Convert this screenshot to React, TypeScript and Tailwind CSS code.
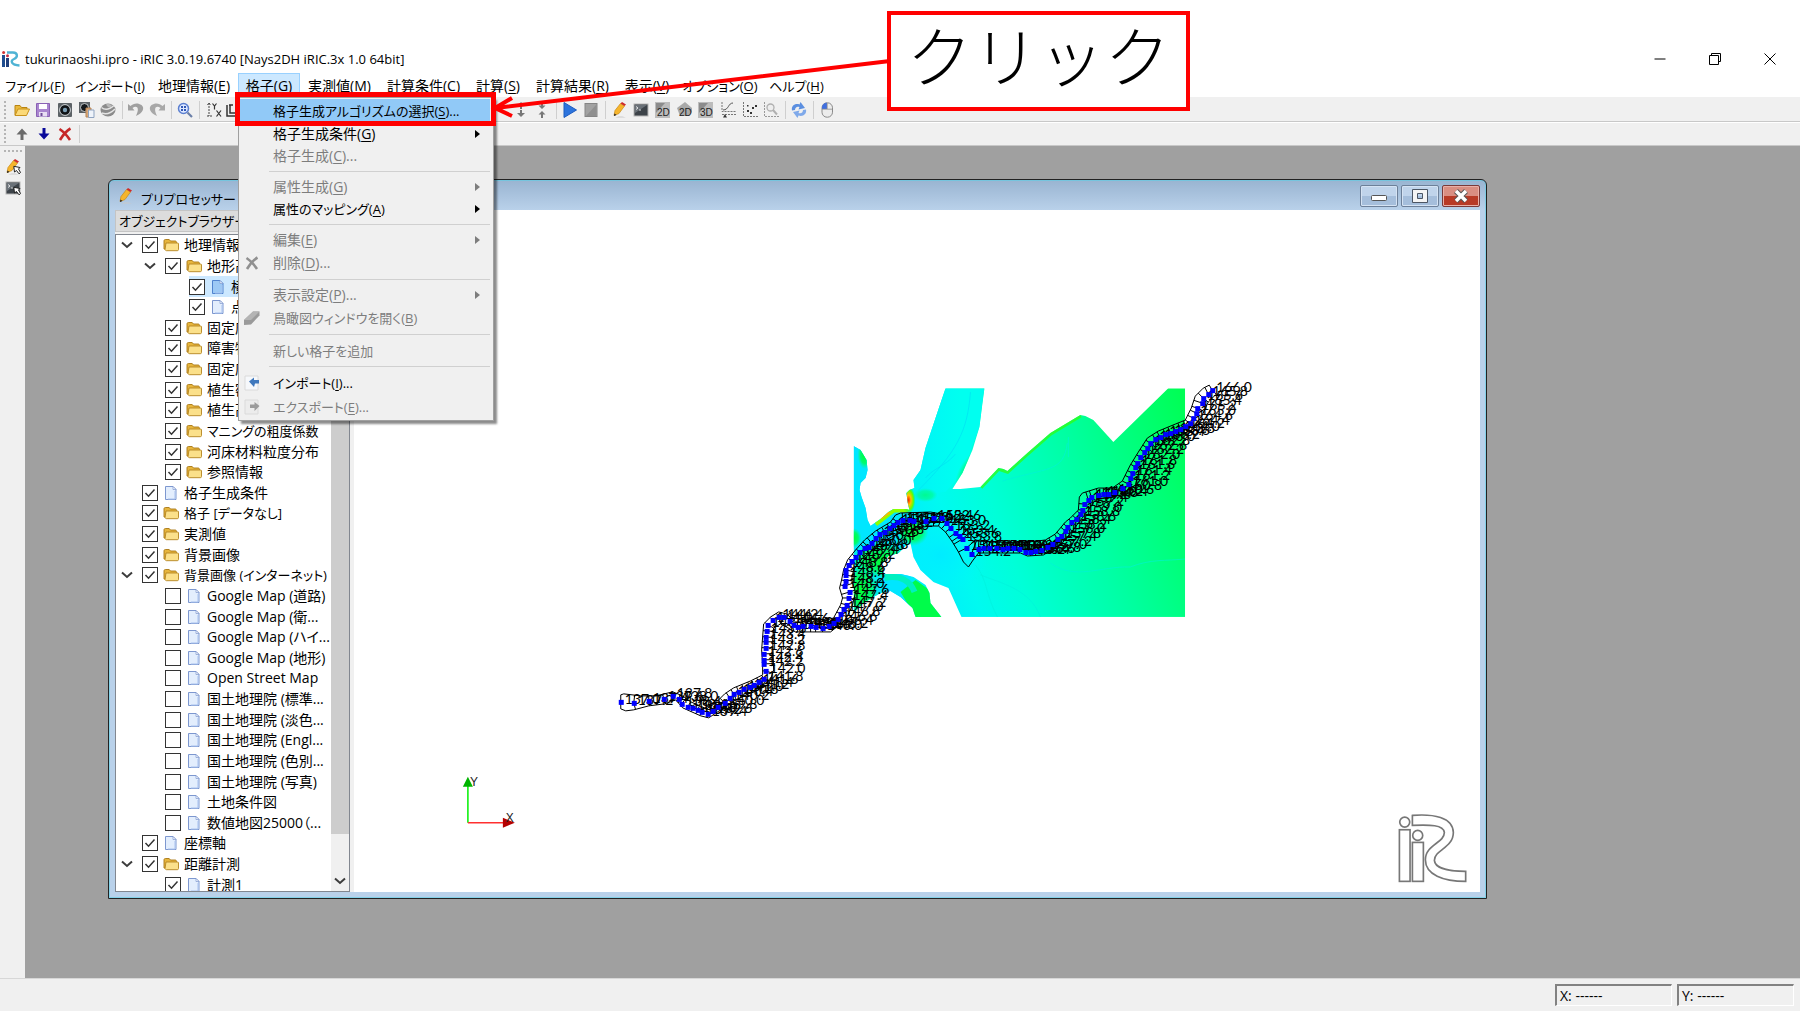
import React from "react";

type Pt = [number, number];

/* ---------- small icons ---------- */

type IconProps = { children: React.ReactNode; size?: string };
const Ico = ({ children, size = "size-4" }: IconProps) => (
  <svg viewBox="0 0 16 16" className={`${size} shrink-0 overflow-visible`} aria-hidden="true">
    {children}
  </svg>
);

const FolderOpen = () => (
  <Ico>
    <path d="M1 13V3.5h5l1.5 2H13V7" fill="#e9b93c" stroke="#b98412" />
    <path d="M1 13.5 4 7h11.5l-3 6.5z" fill="#fbd978" stroke="#c8921c" />
  </Ico>
);
const Save = () => (
  <Ico>
    <path d="M1.5 1.5h13v13h-13z" fill="#a985cf" stroke="#8a62b5" />
    <path d="M4 2h8v5H4z" fill="#fff" />
    <path d="M4 10h8v4.5H4z" fill="#e8def3" />
    <path d="M5.5 11h2v3h-2z" fill="#6f4b98" />
  </Ico>
);
const Camera = () => (
  <Ico>
    <rect x="1" y="1" width="14" height="14" rx="1" fill="#5c6266" />
    <circle cx="8" cy="8" r="5.4" fill="#101417" stroke="#d5dadd" />
    <circle cx="8" cy="8" r="2.2" fill="#7c9fb5" />
  </Ico>
);
const CameraCopy = () => (
  <Ico>
    <rect x="0" y="0" width="11" height="11" fill="#5c6266" />
    <circle cx="5.5" cy="5.5" r="4" fill="#14181b" stroke="#c5cacd" />
    <path d="M7 6h5v9H7z" fill="#d9a878" stroke="#b98657" />
    <path d="M9.5 8h5.5v7.5H9.5z" fill="#eef3fa" stroke="#8fa3c0" />
  </Ico>
);
const Globe = () => (
  <Ico>
    <ellipse cx="8" cy="8" rx="7.500" ry="6.500" fill="#8b8b8b" />
    <path d="M1.500 5.500C6 9 10 7 14 3.500M2 11c5 2 9 0 13-4" stroke="#e4e4e4" strokeWidth="1.500" fill="none" />
    <path d="M6 2.500c3-1 5 0 6 1.500-2 2-4 2-6-1.500z" fill="#b9b9b9" />
  </Ico>
);
const Undo = () => (
  <Ico>
    <path d="M0 2v6.500h6.500L4.500 6C9 3 12 6 8 14 15 11 17 6 13.500 3 10 .5 5.500 1 2.500 4z" fill="#a0a0a0" />
  </Ico>
);
const Redo = () => (
  <Ico>
    <path d="M16 2v6.500H9.500L11.500 6C7 3 4 6 8 14 1 11-1 6 2.500 3 6 .5 10.500 1 13.500 4z" fill="#a8a8a8" />
  </Ico>
);
const ZoomIcon = () => (
  <Ico>
    <circle cx="6.500" cy="6.500" r="5" fill="#dfe9ff" stroke="#5b7fd0" strokeWidth="1.500" />
    <path d="M4 4h2v2H4zM7 4h2v2H7zM4 7h2v2H4zM7 7h2v2H7z" fill="#3158b5" />
    <path d="m10.500 10.500 4.500 4.500" stroke="#6a7fa8" strokeWidth="2.200" />
  </Ico>
);
const AxesIcon = () => (
  <Ico>
    <path d="M3 1v13M1 14h6M1.500 3 3 .8 4.500 3" fill="none" stroke="#444" strokeDasharray="2 1" />
    <path d="M6.500 1.500 8.500 4l2-2.500M8.500 4v3.500M10.500 8.500l4.500 6M15 8.500l-4.500 6" fill="none" stroke="#333" strokeWidth="1.200" />
  </Ico>
);
const CornerIcon = () => (
  <Ico>
    <path d="M2 3v11h12M5 3v8h8M4 3h4" fill="none" stroke="#333" strokeWidth="1.500" />
  </Ico>
);
const Spread = ({ inward = false }: { inward?: boolean }) => (
  <Ico>
    {inward ? (
      <path d="M8 7 4.500 3.500H7V0h2v3.500h2.500zM8 9l-3.500 3.500H7V16h2v-3.500h2.500z" fill="#777" />
    ) : (
      <path d="M8 0 4.500 3.500H7V7h2V3.500h2.500zM8 15l-4-4h3V8h2v3h3z" fill="#777" />
    )}
  </Ico>
);
const Play = () => (
  <Ico>
    <path d="M2 .5 14.500 8 2 15.500z" fill="#2d74dd" stroke="#1d5cc0" />
  </Ico>
);
const Stop = () => (
  <Ico>
    <rect x="2" y="1.500" width="12" height="13" fill="#a2a2a2" stroke="#858585" />
    <path d="M3 14 13 3v11z" fill="#8f8f8f" />
  </Ico>
);
const Pencil = () => (
  <Ico>
    <path d="M3 15.500c3-1.500 8-1.500 11 0z" fill="#c9c9c9" />
    <path d="m2 13.500 1-5L8.500 1.500l4 2.500-5.500 7.500z" fill="#f6b52c" stroke="#c98a14" strokeWidth=".7" />
    <path d="M8.500 1.500 10 0l4 2.500L12.500 4z" fill="#cf2a2a" />
    <path d="m2 14 .4-2.500L4.500 13z" fill="#222" />
  </Ico>
);
const Console = () => (
  <Ico>
    <rect x="1" y="2" width="14" height="12" fill="#3d4349" stroke="#b6b6b6" />
    <path d="M2 3h12L2 11z" fill="#6a7178" />
    <path d="m3 4.500 2 1.500-2 1.500M6 8h2" stroke="#fff" strokeWidth=".8" fill="none" />
  </Ico>
);
const Dim = ({ label, house = false }: { label: string; house?: boolean }) => (
  <Ico>
    {house ? (
      <path d="M0 6 8 0l7 6v4l-3 4H3z" fill="#a9a9a9" />
    ) : (
      <path d="M0 0h15v16H0z" fill="#bcbcbc" />
    )}
    {!house && <path d="M1 1h9L1 11z" fill="#8c8c8c" />}
    <text x="2" y="14" className="font-['Liberation_Sans'] text-[10px]" fill="#222">{label}</text>
  </Ico>
);
const ChartLine = () => (
  <Ico>
    <path d="M2 0v9.500h14M2 12.500h14" fill="none" stroke="#777" strokeDasharray="2 1" />
    <path d="M3 8c6 0 5-7 10-7" fill="none" stroke="#555" />
    <path d="M3 15.500 5 12l2 3.500z" fill="#333" />
  </Ico>
);
const ChartDots = () => (
  <Ico>
    <path d="M1.500 0v14.500H16" fill="none" stroke="#777" strokeDasharray="2 1" />
    <path d="M5 8h2v2H5zM8 10h2v2H8zM10 5h2v2h-2zM13 3h2v2h-2zM5 3h1.500v1.500H5z" fill="#333" />
  </Ico>
);
const ChartZoom = () => (
  <Ico>
    <path d="M1.500 0v14.500H16" fill="none" stroke="#999" strokeDasharray="2 1" />
    <circle cx="7.500" cy="5.500" r="3.500" fill="#eee" stroke="#b0b0b0" strokeWidth="1.300" />
    <path d="m10 8 4 4.500" stroke="#b0b0b0" strokeWidth="2" />
  </Ico>
);
const Refresh = () => (
  <Ico>
    <path d="M1 8.500C0 4 4 1 8.500 2.500L9.500 0l4.500 6-6.500 1.500 1-2.500C6 4 4 5.500 4 8z" fill="#5b8fe0" />
    <path d="M15 7.500C16 12 12 15 7.500 13.500L6.500 16 2 10l6.500-1.500-1 2.500c2.500 1 4.500-.5 4.500-3z" fill="#7fa9ea" />
  </Ico>
);
const Mouse = () => (
  <Ico>
    <rect x="3" y=".8" width="10.500" height="14.400" rx="5" fill="#ececec" stroke="#8b8b8b" />
    <path d="M3 7V5.500C3 3 5 .8 8 .8V7z" fill="#3f6fe0" />
    <path d="M3 7.200h10.500M8.200 1v6" stroke="#8b8b8b" strokeWidth=".8" />
  </Ico>
);
const ArrowUp = () => (
  <Ico>
    <path d="m8 2.500 5.500 6h-4V14h-3V8.500h-4z" fill="#6a6a6a" />
  </Ico>
);
const ArrowDown = () => (
  <Ico>
    <path d="m8 13.500 5.500-6h-4V2h-3v5.500h-4z" fill="#0a0a9a" />
  </Ico>
);
const Cross = ({ color = "#c62828" }: { color?: string }) => (
  <Ico>
    <path d="M2.500 3c4 2.500 7.500 6.500 10.500 11M13.500 2.500C9 5 6 9 3 14" stroke={color} strokeWidth="2.600" fill="none" />
  </Ico>
);
const Folder = () => (
  <Ico>
    <path d="M1 12V4c0-1 .5-1.500 1.500-1.500h3.700L7.500 4H12c1 0 1.500.5 1.500 1.500V12z" fill="#e6b53d" stroke="#a87714" strokeWidth=".9" />
    <path d="M3 6h11.500c.8 0 1 .4 1 1v5.500c0 .7-.4 1.200-1.200 1.200H3.500C2.800 13.700 2 13 2 12.500z" fill="#fbe08a" stroke="#b48520" strokeWidth=".9" />
  </Ico>
);
const Page = ({ selected = false }: { selected?: boolean }) => (
  <Ico>
    <path d="M2.500 1.500h7.500l3 3v10H2.500z" fill={selected ? "#9cc9f5" : "#e3eefd"} stroke={selected ? "#4f83cf" : "#7d97cf"} />
    <path d="M10 1.500v3h3z" fill="#fff" stroke="#7d97cf" strokeWidth=".7" />
    <path d="M12 6v8H5" fill="none" stroke="#a9c3ee" />
  </Ico>
);
const Chevron = () => (
  <svg viewBox="0 0 12 8" className="h-2 w-3 shrink-0" aria-hidden="true">
    <path d="m1 1.500 5 4.500 5-4.500" fill="none" stroke="#3c3c3c" strokeWidth="2" />
  </svg>
);
const Brick = () => (
  <Ico>
    <path d="M0 10 9 1.500h6.500v4L7 14.500 0 15z" fill="#9a9a9a" />
    <path d="M0 10 9 1.500h6.500L7 10z" fill="#b4b4b4" />
  </Ico>
);
const Transfer = ({ active = false }: { active?: boolean }) => (
  <Ico>
    <path d="M1 1h13v14H1z" fill={active ? "#f6f8fb" : "#ececec"} stroke="#dadada" />
    {active ? (
      <path d="m5 6.500 5-4V5h5v3.500h-4L10 12z" fill="#3f78bd" />
    ) : (
      <path d="m15.500 7-5-4v2.500H6V9h4.500v3z" fill="#9b9b9b" />
    )}
  </Ico>
);
const AppLogo = () => (
  <svg viewBox="0 0 18 16" className="h-4 w-[18px] shrink-0" aria-hidden="true">
    <path d="M0 4h3v12H0z" fill="#1f4d8f" />
    <circle cx="1.600" cy="1.600" r="1.500" fill="#d23636" />
    <path d="M4 7h3v9H4z" fill="#1f3f7c" />
    <circle cx="5.500" cy="4.800" r="1.500" fill="#c72f45" />
    <path d="M5 1.500h6c5 0 5 5 1 6.500-4 1.500-3 6 5.500 6.500" fill="none" stroke="#4fb3d4" strokeWidth="2.400" />
  </svg>
);

/* ---------- menu bar ---------- */

const Key = ({ k }: { k: string }) => (
  <>
    (<span className="underline underline-offset-2">{k}</span>)
  </>
);

type Entry =
  | { sep: true }
  | { sep?: false; label: string; k?: string; dots?: boolean; on?: boolean; sub?: boolean; hot?: boolean; small?: boolean; icon?: React.ReactNode; h: string };

const entries: Entry[] = [
  { label: "格子生成アルゴリズムの選択", k: "S", dots: true, on: true, hot: true, small: true, h: "h-6" },
  { label: "格子生成条件", k: "G", on: true, sub: true, h: "h-[22px]" },
  { label: "格子生成", k: "C", dots: true, h: "h-[22px]" },
  { sep: true },
  { label: "属性生成", k: "G", sub: true, h: "h-[22px]" },
  { label: "属性のマッピング", k: "A", on: true, sub: true, small: true, h: "h-[22px]" },
  { sep: true },
  { label: "編集", k: "E", sub: true, h: "h-[22px]" },
  { label: "削除", k: "D", dots: true, icon: <Cross color="#909090" />, h: "h-6" },
  { sep: true },
  { label: "表示設定", k: "P", dots: true, sub: true, h: "h-[22px]" },
  { label: "鳥瞰図ウィンドウを開く", k: "B", small: true, icon: <Brick />, h: "h-6" },
  { sep: true },
  { label: "新しい格子を追加", small: true, h: "h-[23px]" },
  { sep: true },
  { label: "インポート", k: "I", dots: true, on: true, small: true, icon: <Transfer active />, h: "h-6" },
  { label: "エクスポート", k: "E", dots: true, small: true, icon: <Transfer />, h: "h-6" },
];

const GridMenu = () => (
  <div role="menu" className="absolute top-full left-0 z-20 w-[256px] border border-[#a0a0a0] bg-[#f0f0f0] p-px pr-[3px] shadow-[3px_3px_2px_rgba(0,0,0,0.45)]">
    {entries.map((e, i) =>
      e.sep ? (
        <div key={i} className="flex h-[9px] items-center pl-[29px]">
          <div className="h-px w-full bg-[#d0d0d0]" />
        </div>
      ) : (
        <button
          key={i}
          role="menuitem"
          className={`flex w-full items-center text-left whitespace-nowrap ${e.h} ${e.small ? "text-[13px]" : ""} ${e.hot ? "bg-[#91c9f7]" : ""} ${e.on ? "text-black" : "text-[#7d7d7d]"}`}
        >
          <span className="flex w-[33px] shrink-0 pl-1">{e.icon}</span>
          <span className="grow">
            {e.label}
            {e.k && <Key k={e.k} />}
            {e.dots && "..."}
          </span>
          {e.sub && (
            <svg viewBox="0 0 5 8" className="mr-2.5 h-2 w-[5px]" aria-hidden="true">
              <path d="M0 0v8l5-4z" fill="currentColor" />
            </svg>
          )}
        </button>
      ),
    )}
  </div>
);

const menus = [
  { label: "ファイル", k: "F", w: "w-[70px]", small: true },
  { label: "インポート", k: "I", w: "w-[80px]", small: true },
  { label: "地理情報", k: "E", w: "w-[88px]" },
  { label: "格子", k: "G", w: "w-[62px]", open: true },
  { label: "実測値", k: "M", w: "w-[79px]" },
  { label: "計算条件", k: "C", w: "w-[89px]" },
  { label: "計算", k: "S", w: "w-[60px]" },
  { label: "計算結果", k: "R", w: "w-[89px]" },
  { label: "表示", k: "V", w: "w-[60px]" },
  { label: "オプション", k: "O", w: "w-[86px]", small: true },
  { label: "ヘルプ", k: "H", w: "w-[67px]", small: true },
];

/* ---------- tool bars ---------- */

const Sep = ({ w }: { w: string }) => (
  <div className={`flex shrink-0 justify-center ${w}`}>
    <div className="h-[18px] w-px bg-[#cfcfcf]" />
  </div>
);
const Grip = () => <div className="mr-[5px] ml-1 h-[18px] w-0.5 shrink-0 border-l-2 border-dotted border-[#b5b5b5]" />;

const Tools = ({ w, items }: { w: string; items: [string, React.ReactNode][] }) => (
  <div className={`flex shrink-0 ${w}`}>
    {items.map(([name, icon]) => (
      <button key={name} aria-label={name} className="flex flex-1 justify-center">
        {icon}
      </button>
    ))}
  </div>
);

/* ---------- object browser ---------- */

type Node = { t: string; l: 0 | 1 | 2; f?: boolean; c?: boolean; x?: boolean; s?: boolean; small?: boolean };
const tree: Node[] = [
  { t: "地理情報", l: 0, f: true, c: true, x: true },
  { t: "地形高", l: 1, f: true, c: true, x: true },
  { t: "横断", l: 2, c: true, s: true },
  { t: "点群", l: 2, c: true },
  { t: "固定床", l: 1, f: true, c: true },
  { t: "障害物", l: 1, f: true, c: true },
  { t: "固定床", l: 1, f: true, c: true },
  { t: "植生密", l: 1, f: true, c: true },
  { t: "植生高", l: 1, f: true, c: true },
  { t: "マニングの粗度係数", l: 1, f: true, c: true, small: true },
  { t: "河床材料粒度分布", l: 1, f: true, c: true },
  { t: "参照情報", l: 1, f: true, c: true },
  { t: "格子生成条件", l: 0, c: true },
  { t: "格子 [データなし]", l: 0, f: true, c: true, small: true },
  { t: "実測値", l: 0, f: true, c: true },
  { t: "背景画像", l: 0, f: true, c: true },
  { t: "背景画像 (インターネット)", l: 0, f: true, c: true, x: true, small: true },
  { t: "Google Map (道路)", l: 1 },
  { t: "Google Map (衛...", l: 1 },
  { t: "Google Map (ハイ...", l: 1 },
  { t: "Google Map (地形)", l: 1 },
  { t: "Open Street Map", l: 1 },
  { t: "国土地理院 (標準...", l: 1 },
  { t: "国土地理院 (淡色...", l: 1 },
  { t: "国土地理院 (Engl...", l: 1 },
  { t: "国土地理院 (色別...", l: 1 },
  { t: "国土地理院 (写真)", l: 1 },
  { t: "土地条件図", l: 1 },
  { t: "数値地図25000（...", l: 1 },
  { t: "座標軸", l: 0, c: true },
  { t: "距離計測", l: 0, f: true, c: true, x: true },
  { t: "計測1", l: 1, c: true },
];
const indent = { 0: "pl-[5px]", 1: "pl-7", 2: "pl-[52px]" };

const TreeRow = ({ n }: { n: Node }) => (
  <li className={`flex min-h-0 flex-1 items-center ${indent[n.l]}`}>
    <span className="flex w-[21px] shrink-0">{n.x && <Chevron />}</span>
    <label className={`flex h-full grow items-center whitespace-nowrap ${n.small ? "text-[13px]" : ""} ${n.s ? "bg-[#cce8ff]" : ""}`}>
      <span className="relative flex size-4 shrink-0">
        <input type="checkbox" defaultChecked={n.c} className="peer size-4 appearance-none border border-[#333] bg-white" />
        <svg viewBox="0 0 16 16" className="pointer-events-none absolute inset-0 hidden size-4 peer-checked:block" aria-hidden="true">
          <path d="m3.500 8 3 3.200 6-6.700" fill="none" stroke="#333" strokeWidth="1.500" />
        </svg>
      </span>
      <span className="mr-[5px] ml-[5px] flex">{n.f ? <Folder /> : <Page selected={n.s} />}</span>
      {n.t}
    </label>
  </li>
);

/* ---------- map ---------- */

const river: Pt[] = [
  [620, 702], [633, 703], [648, 701], [663, 699], [672, 696], [678, 699], [681, 704], [687, 707], [692, 708], [697, 710],
  [701, 712], [707, 714], [712, 711], [717, 707], [724, 703], [729, 698], [733, 694], [738, 692], [743, 689], [749, 687],
  [753, 685], [758, 682], [763, 679], [765, 671], [763, 664], [763, 660], [763, 654], [765, 648], [765, 642], [765, 637],
  [766, 631], [767, 625], [772, 620], [778, 617], [783, 617], [789, 621], [793, 625], [797, 627], [802, 626], [810, 626],
  [815, 627], [822, 628], [828, 626], [833, 623], [837, 619], [840, 614], [843, 609], [846, 605], [848, 598], [849, 592],
  [844, 586], [845, 581], [845, 575], [845, 570], [848, 565], [851, 561], [855, 557], [859, 552], [864, 548], [868, 547],
  [871, 543], [875, 538], [879, 534], [884, 532], [889, 528], [893, 525], [897, 522], [902, 520], [909, 520], [913, 521],
  [925, 521], [933, 518], [941, 518], [946, 523], [950, 528], [955, 533], [959, 536], [962, 539], [966, 548], [971, 554],
  [978, 549], [983, 548], [989, 548], [996, 548], [1002, 549], [1007, 548], [1013, 548], [1019, 549], [1025, 552], [1030, 552],
  [1035, 551], [1041, 550], [1047, 547], [1052, 544], [1057, 539], [1061, 536], [1065, 531], [1067, 527], [1071, 522], [1076, 519],
  [1080, 514], [1082, 510], [1084, 504], [1088, 500], [1091, 497], [1098, 495], [1103, 494], [1108, 494], [1114, 492], [1122, 488],
  [1128, 484], [1130, 478], [1132, 473], [1135, 467], [1137, 463], [1140, 457], [1144, 452], [1147, 448], [1150, 443], [1155, 439],
  [1160, 437], [1165, 434], [1170, 433], [1175, 431], [1180, 429], [1185, 426], [1190, 423], [1193, 418], [1196, 413], [1197, 408],
  [1202, 403], [1203, 398], [1208, 394], [1212, 390],
];
const upper: Pt[] = [
  [620, 695], [623, 694], [640, 696], [655, 696], [672, 692], [682, 696], [690, 702], [706, 709], [716, 702], [724, 694],
  [733, 688], [750, 681], [762, 675], [762, 665], [761, 650], [763, 624], [770, 617], [778, 612], [786, 614], [795, 622],
  [820, 622], [833, 618], [840, 605], [842, 598], [839, 588], [841, 580], [843, 570], [847, 560], [855, 550], [864, 540],
  [875, 531], [890, 522], [895, 515], [900, 513], [930, 512], [941, 514], [953, 519], [962, 524], [968, 532], [976, 541],
  [1020, 543], [1045, 540], [1055, 534], [1065, 522], [1070, 518], [1078, 510], [1079, 497], [1082, 493], [1098, 488], [1112, 488],
  [1122, 481], [1130, 465], [1138, 452], [1147, 438], [1158, 431], [1175, 424], [1185, 420], [1191, 408], [1195, 396], [1203, 388],
  [1209, 385],
];
const lower: Pt[] = [
  [620, 709], [625, 711], [633, 710], [648, 706], [664, 704], [675, 700], [682, 708], [700, 716], [708, 718], [720, 710],
  [735, 700], [768, 685], [773, 670], [772, 640], [773, 628], [780, 624], [795, 632], [830, 632], [845, 620], [852, 605],
  [855, 592], [851, 580], [853, 570], [862, 558], [880, 543], [900, 532], [915, 528], [930, 526], [938, 526], [945, 532],
  [952, 542], [958, 552], [963, 562], [968, 567], [972, 561], [978, 553], [1000, 553], [1020, 553], [1027, 556], [1043, 555],
  [1048, 552], [1062, 543], [1075, 527], [1088, 510], [1095, 500], [1120, 495], [1135, 485], [1140, 467], [1155, 447], [1175, 437],
  [1192, 430], [1202, 415], [1208, 402], [1216, 394],
];

const nearest = ([x, y]: Pt, line: Pt[]): Pt => {
  let best: Pt = line[0];
  let min = Infinity;
  for (let i = 1; i < line.length; i++) {
    const [ax, ay] = line[i - 1];
    const [bx, by] = line[i];
    const dx = bx - ax;
    const dy = by - ay;
    const t = Math.max(0, Math.min(1, ((x - ax) * dx + (y - ay) * dy) / (dx * dx + dy * dy)));
    const p: Pt = [ax + t * dx, ay + t * dy];
    const d = Math.hypot(p[0] - x, p[1] - y);
    if (d < min) {
      min = d;
      best = p;
    }
  }
  return best;
};
const poly = (a: Pt[]) => a.map((p) => p.join(",")).join(" ");
const crossings = river
  .map((p) => {
    const a = nearest(p, upper);
    const b = nearest(p, lower);
    return `M${a[0]} ${a[1]}L${p[0]} ${p[1]}L${b[0]} ${b[1]}`;
  })
  .join("");
const station = (i: number) => (137 + Math.round((i / (river.length - 1)) * 145) / 5).toFixed(1);

const terrain =
  "M853 446 860 450 866 460 867 470 865 478 860 483 859 490 861 497 865 508 867 520 870 526 880 519 888 512 893 509 905 509 909 510 907 502 906 493 909 490 914 488 913 480 920 470 925 448 945 388H984L982 403 979 427 972 450 962 473 952 489 960 489 980 487 998 468 1003 469 1007 471 1027 453 1050 433 1080 415 1085 416 1093 420 1113 442 1168 388H1185V617H961L948 588 933 582 920 570 913 557 910 543 905 546 898 553 888 556 880 565 883 574 900 574 913 577 925 585 929 593 930 603 941 617H915L912 608 900 597 890 591 880 593 873 597 863 603 853 613Z";

const RiverMap = () => (
  <svg viewBox="353 211 1127 680" className="size-full" role="img" aria-label="河川の地形図">
    <defs>
      <linearGradient id="elev" gradientUnits="userSpaceOnUse" x1="900" y1="560" x2="1200" y2="450">
        <stop offset="0" stopColor="#00e8ff" />
        <stop offset=".18" stopColor="#00faf0" />
        <stop offset=".33" stopColor="#00ffd8" />
        <stop offset=".6" stopColor="#00ffa6" />
        <stop offset="1" stopColor="#00ff56" />
      </linearGradient>
      <linearGradient id="bankEdge" gradientUnits="userSpaceOnUse" x1="853" y1="0" x2="960" y2="0">
        <stop offset="0" stopColor="#00e4ff" />
        <stop offset="1" stopColor="#00fff0" />
      </linearGradient>
      <radialGradient id="hot">
        <stop offset="0" stopColor="#ff2000" />
        <stop offset=".35" stopColor="#ffc400" />
        <stop offset=".7" stopColor="#60ff00" />
        <stop offset="1" stopColor="#00ff60" stopOpacity="0" />
      </radialGradient>
      <radialGradient id="green">
        <stop offset="0" stopColor="#00ff30" />
        <stop offset=".6" stopColor="#00ff50" stopOpacity=".8" />
        <stop offset="1" stopColor="#00ff80" stopOpacity="0" />
      </radialGradient>
      <radialGradient id="cool">
        <stop offset="0" stopColor="#00ecff" />
        <stop offset="1" stopColor="#00f6ff" stopOpacity="0" />
      </radialGradient>
      <clipPath id="land">
        <path d={terrain} />
      </clipPath>
    </defs>
    <g clipPath="url(#land)">
      <rect x="853" y="388" width="332" height="229" fill="url(#elev)" />
      <rect x="853" y="388" width="57" height="229" fill="#00e6ff" />
      <path d="M945 388H984L979 427 962 473 945 492 905 495Z" fill="url(#bankEdge)" />
      <ellipse cx="940" cy="555" rx="48" ry="40" fill="url(#cool)" />
      <ellipse cx="864" cy="455" rx="7" ry="14" fill="url(#green)" />
      <ellipse cx="853" cy="538" rx="8" ry="10" fill="url(#green)" />
      <ellipse cx="880" cy="560" rx="30" ry="18" fill="url(#green)" />
      <ellipse cx="860" cy="590" rx="18" ry="26" fill="url(#green)" />
      <ellipse cx="912" cy="532" rx="16" ry="14" fill="url(#green)" />
      <ellipse cx="968" cy="470" rx="22" ry="9" transform="rotate(-60 968 470)" fill="url(#green)" opacity=".6" />
      <ellipse cx="925" cy="495" rx="12" ry="7" fill="url(#green)" opacity=".5" />
      <path d="M900 592 915 580 929 590 941 617H915Z" fill="#00ff2a" opacity=".85" />
      <path d="M884 578c16-4 26 4 30 14" fill="none" stroke="#00f0c0" strokeWidth="6" />
      <path d="M875 524 893 510H907" fill="none" stroke="#8cff00" strokeWidth="5" />
      <path d="M880 518 889 512" stroke="#ffb400" strokeWidth="3" />
      <ellipse cx="908" cy="500" rx="7" ry="14" fill="url(#hot)" />
      <path d="M980 487 998 468 1007 471 1027 453 1050 433 1080 415" fill="none" stroke="#30ff10" strokeWidth="5" opacity=".75" />
      <path d="M975 565c12 14 10 30 22 52M980 575c20 8 50 14 60 42M1050 563c25 18 50 3 80 4 20-8 35-6 55-8M1067 443c-4 30-20 24-65 38M1068 437v20" fill="none" stroke="#00f0dc" strokeWidth="1" opacity=".6" />
      <path d="M970 392c-3 40-14 60-52 98M925 478c8-10 20-12 30-24" fill="none" stroke="#00dcf4" strokeWidth="1" opacity=".6" />
    </g>
    <g fill="none" stroke="#000" strokeWidth="1">
      <polyline points={poly(upper)} />
      <polyline points={poly(lower)} />
      <path d={crossings} />
    </g>
    <g className="font-['Lato'] text-[14px]" fill="#000">
      {river.map(([x, y], i) => (
        <text key={i} x={x + 4} y={y + 2}>
          {station(i)}
        </text>
      ))}
    </g>
    <g fill="#0000ff">
      {river.map(([x, y], i) => (
        <rect key={i} x={x - 2} y={y - 2} width="5" height="5" />
      ))}
    </g>
    <path d="M467 823V786" stroke="#00f000" strokeWidth="1.500" />
    <path d="M467 823H503" stroke="#ff3030" strokeWidth="1.500" />
    <path d="m462 787 5-10 5 10z" fill="#00b400" />
    <path d="m502 818 12 5-12 5z" fill="#b40000" />
    <g className="font-['Liberation_Sans'] text-[12px]" fill="#222">
      <text x="469" y="786">Y</text>
      <text x="505" y="822">X</text>
    </g>
    <g transform="translate(1380 800) scale(.3333)" fill="#fff" stroke="#777" strokeWidth="5">
      <circle cx="74" cy="67" r="15" />
      <rect x="58" y="90" width="32" height="155" />
      <path d="M97 47C160 42 218 52 220 98C220 145 163 150 163 182C165 208 215 215 257 215V245C190 245 136 225 136 180C136 135 193 130 193 98C190 75 150 75 97 77Z" />
      <circle cx="113" cy="107" r="15" />
      <rect x="97" y="128" width="33" height="117" />
    </g>
  </svg>
);

const CaptionButton = ({ name, close = false, children }: { name: string; close?: boolean; children: React.ReactNode }) => (
  <button
    aria-label={name}
    className={`flex h-[22px] w-[38px] items-center justify-center rounded-[2px] border ${
      close
        ? "border-[#7a3a3a] bg-linear-to-b from-[#d98e82] from-50% to-[#b83a26] to-50% inset-ring inset-ring-[#e9b0a8]"
        : "border-[#6d8099] bg-linear-to-b from-[#c0d4eb] from-50% to-[#a5bedb] to-50% inset-ring inset-ring-[#d5e3f3]"
    }`}
  >
    {children}
  </button>
);

const Preprocessor = () => (
  <section className="absolute top-[33px] left-[83px] flex h-[720px] w-[1379px] flex-col rounded-t-md border border-[#222] bg-[#b9d1ea] bg-linear-to-b from-[#99b4d1] to-[#b9d1ea] to-[30px] px-[6px] pb-[6px] inset-ring inset-ring-[#5fd0e6]/60">
    <header className="flex h-[30px] shrink-0 items-center gap-[3px] pt-0.5 pl-[3px]">
      <Pencil />
      <h2 className="grow pt-1.5 pl-1 text-[13px]">プリプロセッサー</h2>
      <CaptionButton name="最小化">
        <svg viewBox="0 0 16 6" className="mt-1 h-1.5 w-4">
          <rect x=".5" y=".5" width="15" height="5" rx="1" fill="#fff" stroke="#555" />
        </svg>
      </CaptionButton>
      <CaptionButton name="最大化">
        <svg viewBox="0 0 16 14" className="h-3.5 w-4">
          <path d="M.5.5h15v13H.5zM5.500 4.500v5h5v-5z" fill="#f4f4f4" fillRule="evenodd" stroke="#4b5563" />
        </svg>
      </CaptionButton>
      <CaptionButton name="閉じる" close>
        <svg viewBox="0 0 16 14" className="h-3.5 w-4">
          <path d="m3 2 10 10M13 2 3 12" stroke="#555" strokeWidth="5.500" />
          <path d="m3 2 10 10M13 2 3 12" stroke="#fff" strokeWidth="3.500" />
        </svg>
      </CaptionButton>
    </header>
    <div className="flex min-h-0 grow bg-[#f0f0f0]">
      <aside className="flex w-[235px] shrink-0 flex-col">
        <h3 className="mb-0.5 flex h-[22px] shrink-0 items-center border border-[#c4c4c4] bg-[#dcdcdc] pl-[3px] text-[13px] whitespace-nowrap">オブジェクトブラウザー</h3>
        <div className="flex min-h-0 grow border border-[#828790] bg-white">
          <div className="min-w-0 grow overflow-hidden">
            <ul className="flex h-[660px] flex-col">
              {tree.map((n, i) => (
                <TreeRow key={i} n={n} />
              ))}
            </ul>
          </div>
          <div className="flex w-[18px] shrink-0 flex-col bg-[#f0f0f0]">
            <div className="grow bg-[#cdcdcd]" />
            <div className="flex h-[57px] items-end justify-center pb-1.5">
              <Chevron />
            </div>
          </div>
        </div>
      </aside>
      <div className="ml-1 min-w-0 grow bg-white">
        <RiverMap />
      </div>
    </div>
  </section>
);

/* ---------- page ---------- */

export default function App() {
  return (
    <div className="relative flex h-screen flex-col overflow-hidden bg-white font-['Open_Sans','Noto_Sans_CJK_JP',sans-serif] text-[14px] leading-5 text-black [font-feature-settings:'palt']">
      <header className="flex h-[73px] shrink-0 items-end pr-[3px] pb-0.5 pl-0.5">
        <div className="flex grow items-center gap-[5px] pb-0.5">
          <AppLogo />
          <h1 className="text-[13px]">tukurinaoshi.ipro - iRIC 3.0.19.6740 [Nays2DH iRIC.3x 1.0 64bit]</h1>
        </div>
        <div className="flex h-6">
          <button aria-label="最小化" className="flex w-[55px] items-center justify-center">
            <svg viewBox="0 0 12 12" className="size-3">
              <path d="M.5 6h11" stroke="#000" />
            </svg>
          </button>
          <button aria-label="元に戻す" className="flex w-[55px] items-center justify-center">
            <svg viewBox="0 0 12 12" className="size-3">
              <path d="M2.500 2.500v-2h9v8h-2M.5 2.500h9v9h-9z" fill="none" stroke="#000" />
            </svg>
          </button>
          <button aria-label="閉じる" className="flex w-[55px] items-center justify-center">
            <svg viewBox="0 0 12 12" className="size-3">
              <path d="m.5.5 11 11M11.500.5l-11 11" stroke="#000" />
            </svg>
          </button>
        </div>
      </header>

      <nav className="flex h-6 shrink-0">
        {menus.map((m) => (
          <div key={m.label} className={`relative ${m.w} ${m.open ? "bg-[#cce8ff] inset-ring inset-ring-[#99d1ff]" : ""}`}>
            <button className={`flex size-full items-center justify-center pt-0.5 whitespace-nowrap ${m.small ? "text-[13px]" : ""}`}>
              {m.label}
              <Key k={m.k} />
            </button>
            {m.open && <GridMenu />}
          </div>
        ))}
      </nav>

      <div className="flex h-[25px] shrink-0 items-center border-b border-[#c8c8c8] bg-[#f0f0f0] pt-0.5">
        <Grip />
        <Tools w="w-[108px]" items={[["開く", <FolderOpen />], ["保存", <Save />], ["スナップショット", <Camera />], ["コピー", <CameraCopy />], ["地球", <Globe />]]} />
        <Sep w="w-1.5" />
        <Tools w="w-[43px]" items={[["元に戻す", <Undo />], ["やり直す", <Redo />]]} />
        <Sep w="w-[7px]" />
        <Tools w="w-5" items={[["拡大", <ZoomIcon />]]} />
        <Sep w="w-[9px]" />
        <Tools w="w-[38px]" items={[["XY軸", <AxesIcon />], ["原点", <CornerIcon />]]} />
        <div className="w-[268px] shrink-0" />
        <Tools w="w-[43px]" items={[["広げる", <Spread />], ["縮める", <Spread inward />]]} />
        <Sep w="w-1.5" />
        <Tools w="w-[43px]" items={[["実行", <Play />], ["停止", <Stop />]]} />
        <Sep w="w-[7px]" />
        <Tools
          w="w-[173px]"
          items={[
            ["プリプロセッサー", <Pencil />],
            ["コンソール", <Console />],
            ["2D表示", <Dim label="2D" />],
            ["2D鳥瞰", <Dim label="2D" house />],
            ["3D表示", <Dim label="3D" />],
            ["グラフ", <ChartLine />],
            ["散布図", <ChartDots />],
            ["検証", <ChartZoom />],
          ]}
        />
        <Sep w="w-[7px]" />
        <Tools w="w-5" items={[["更新", <Refresh />]]} />
        <Sep w="w-2" />
        <Tools w="w-5" items={[["マウス", <Mouse />]]} />
      </div>
      <div className="flex h-6 shrink-0 items-center border-t border-t-white border-b border-b-[#c8c8c8] bg-[#f0f0f0]">
        <Grip />
        <Tools w="w-[65px]" items={[["上へ", <ArrowUp />], ["下へ", <ArrowDown />], ["削除", <Cross />]]} />
        <Sep w="w-1.5" />
      </div>

      <div className="flex min-h-0 grow">
        <div className="flex w-[25px] shrink-0 flex-col items-center gap-[5px] bg-[#f0f0f0] pt-1">
          <div className="h-0.5 w-[18px] border-t-2 border-dotted border-[#b5b5b5]" />
          <button aria-label="プリプロセッサー選択" className="relative mt-0.5">
            <Pencil />
            <svg viewBox="0 0 8 9" className="absolute right-0 bottom-0 h-2.5 w-2">
              <path d="M.8.8 7 2 5.500 3.500 7.500 7 6 8.300 3.500 5 1.500 6.500z" fill="#fff" stroke="#222" />
            </svg>
          </button>
          <button aria-label="コンソール選択" className="relative">
            <Console />
            <svg viewBox="0 0 8 9" className="absolute right-0 bottom-0 h-2.5 w-2">
              <path d="M.8.8 7 2 5.500 3.500 7.500 7 6 8.300 3.500 5 1.500 6.500z" fill="#fff" stroke="#222" />
            </svg>
          </button>
        </div>
        <main className="relative min-w-0 grow bg-[#a0a0a0]">
          <Preprocessor />
        </main>
      </div>

      <footer className="flex h-[33px] shrink-0 items-center justify-end gap-[5px] border-t border-[#d7d7d7] bg-[#f0f0f0] pr-1.5">
        {["X", "Y"].map((a) => (
          <div key={a} className="h-[22px] w-[117px] border-t-2 border-r border-b border-l-2 border-t-[#828282] border-r-white border-b-white border-l-[#828282] pl-[3px] text-[14px] leading-5">
            {a}: ------
          </div>
        ))}
      </footer>

      <div className="pointer-events-none absolute top-[92px] left-[235px] z-30 h-[34px] w-[261px] border-[5px] border-[#ff0000]" />
      <svg viewBox="480 0 420 130" className="pointer-events-none absolute top-0 left-[480px] z-30 h-[130px] w-[420px]" aria-hidden="true">
        <path d="M890 61 496 108M512 98 495 108 512 116" fill="none" stroke="#ff0000" strokeWidth="4" />
      </svg>
      <div className="absolute top-[11px] left-[887px] z-30 flex h-[100px] w-[303px] items-center justify-center border-4 border-[#ff0000] bg-white pb-4 font-['Noto_Sans_CJK_JP',sans-serif] text-[66px] leading-none font-light whitespace-nowrap [font-feature-settings:normal]">
        クリック
      </div>
    </div>
  );
}
